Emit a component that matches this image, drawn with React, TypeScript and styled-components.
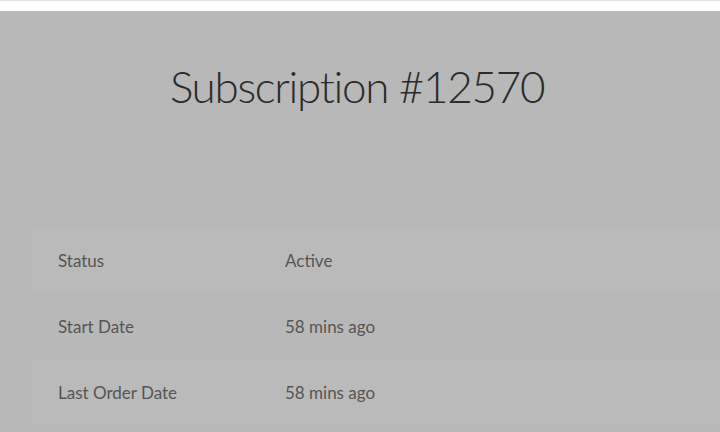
import React from 'react';
import styled, {createGlobalStyle} from 'styled-components'

const Global = createGlobalStyle`
  html, body { margin:0; padding:0; background:#ffffff; }
  body { font-family: Lato, "Open Sans", "Liberation Sans", sans-serif; overflow:hidden; }
`;

const TopStrip = styled.div`
  height:10px;
  border-top:1px solid #e4e4e4;
  background:#ffffff;
`;

const Panel = styled.div`
  background:#b8b8b8;
  height:421px;
  display:flex;
  flex-direction:column;
  padding:0 0 0 32px;
`;

const Title = styled.h1`
  margin:0;
  padding:47px 38px 0 0;
  text-align:center;
  font-weight:300;
  font-size:44px;
  line-height:56px;
  color:#2b2b2b;
  letter-spacing:-1.3px;
`;

const Table = styled.div`
  margin-top:113px;
  display:flex;
  flex-direction:column;
`;

const Row = styled.div<{ $odd: boolean }>`
  display:grid;
  grid-template-columns:227px 1fr;
  align-items:center;
  height:66px;
  padding-left:26px;
  background:${p => (p.$odd ? '#bababa' : '#b8b8b8')};
  font-size:17px;
  color:#555555;
`;

const rows = [
  ['Status', 'Active'],
  ['Start Date', '58 mins ago'],
  ['Last Order Date', '58 mins ago'],
];

const App: React.FC = () => {
  return (
    <>
      <Global />
      <TopStrip />
      <Panel>
        <Title>Subscription #12570</Title>
        <Table>
          {rows.map(([label, value], i) => (
            <Row key={label} $odd={i % 2 === 0}>
              <span>{label}</span>
              <span>{value}</span>
            </Row>
          ))}
        </Table>
      </Panel>
    </>
  );
};

export default App;
